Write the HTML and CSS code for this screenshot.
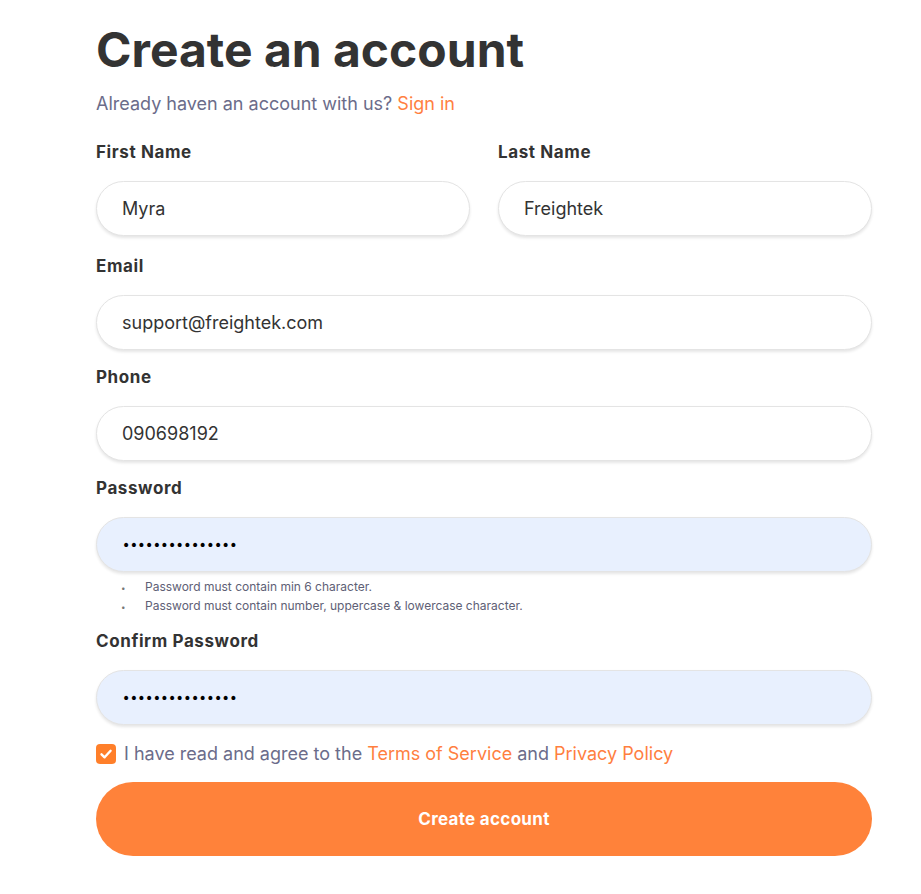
FILE: index.html
```html
<!DOCTYPE html>
<html lang="en">
<head>
<meta charset="utf-8">
<title>Create an account</title>
<link rel="stylesheet" href="styles.css">
</head>
<body>
<main class="page">
  <h1 class="title">Create an account</h1>
  <p class="subtitle">Already haven an account with us? <a class="link" href="#">Sign in</a></p>
  <form class="form">
    <div class="row">
      <div class="field">
        <label class="label">First Name</label>
        <div class="input">Myra</div>
      </div>
      <div class="field">
        <label class="label">Last Name</label>
        <div class="input">Freightek</div>
      </div>
    </div>
    <div class="field">
      <label class="label">Email</label>
      <div class="input">support@freightek.com</div>
    </div>
    <div class="field">
      <label class="label">Phone</label>
      <div class="input">090698192</div>
    </div>
    <div class="field field-pw">
      <label class="label">Password</label>
      <div class="input input-auto"><span class="dots">•••••••••••••••</span></div>
      <ul class="hints">
        <li>Password must contain min 6 character.</li>
        <li>Password must contain number, uppercase &amp; lowercase character.</li>
      </ul>
    </div>
    <div class="field">
      <label class="label">Confirm Password</label>
      <div class="input input-auto"><span class="dots">•••••••••••••••</span></div>
    </div>
    <div class="agree">
      <span class="check"><svg viewBox="0 0 20 20" width="20" height="20"><path d="M5.5 10.3 L8.6 13.3 L14.6 6.8" fill="none" stroke="#fff" stroke-width="2.4" stroke-linecap="round" stroke-linejoin="round"/></svg></span>
      <span class="agree-text">I have read and agree to the <a class="link" href="#">Terms of Service</a> and <a class="link" href="#">Privacy Policy</a></span>
    </div>
    <button type="button" class="btn">Create account</button>
  </form>
</main>
</body>
</html>
```

FILE: styles.css
```css
* { box-sizing: border-box; }
html, body { margin: 0; padding: 0; background: #fff; }
body {
  font-family: Inter, "Open Sans", Arial, sans-serif;
  color: #333;
}
.page {
  width: 776px;
  margin-left: 96px;
  padding-top: 21px;
}
.title {
  margin: 0;
  font-size: 48px;
  line-height: 58px;
  font-weight: 700;
  color: #333;
  letter-spacing: 0;
}
.subtitle {
  margin: 14px 0 0;
  font-size: 18px;
  line-height: 22px;
  color: #6b6c8a;
}
.link { color: #ff7f3f; text-decoration: none; }
.form {
  margin-top: 26px;
  display: flex;
  flex-direction: column;
}
.row {
  display: grid;
  grid-template-columns: 1fr 1fr;
  column-gap: 28px;
  margin-bottom: 3px;
}
.field {
  display: flex;
  flex-direction: column;
  margin-bottom: 16px;
}
.label {
  font-size: 17px;
  line-height: 22px;
  font-weight: 700;
  letter-spacing: 0.6px;
  color: #333;
  margin-bottom: 18px;
}
.input {
  height: 55px;
  border-radius: 28px;
  border: 1px solid #e4e4e4;
  box-shadow: 0 2px 3px rgba(0,0,0,0.1);
  background: #fff;
  padding: 0 25px;
  display: flex;
  align-items: center;
  font-size: 18px;
  color: #333;
}
.input-auto {
  background: #e8f0fe;
}
.dots {
  font-family: "DejaVu Sans", sans-serif;
  font-size: 14px;
  letter-spacing: -0.6px;
  color: #000;
}
.hints {
  margin: 6px 0 0;
  padding-left: 25px;
  list-style: none;
  font-size: 12px;
  line-height: 18px;
  color: #5e6075;
}
.hints li::before {
  content: "\2022";
  display: inline-block;
  width: 24px;
  font-size: 8px;
  color: #777;
}
.field-pw { margin-bottom: 14px; }
.agree {
  display: flex;
  align-items: center;
  gap: 8px;
  margin-top: 2px;
}
.check {
  width: 20px;
  height: 20px;
  border-radius: 4px;
  background: #ff7f2a;
  display: flex;
}
.agree-text {
  font-size: 18px;
  line-height: 22px;
  color: #6b6c8a;
}
.btn {
  margin-top: 17px;
  height: 74px;
  border: none;
  border-radius: 37px;
  background: #ff823a;
  color: #fff;
  font-family: inherit;
  font-size: 17px;
  font-weight: 700;
  letter-spacing: 0.3px;
  padding-bottom: 2px;
}
```
